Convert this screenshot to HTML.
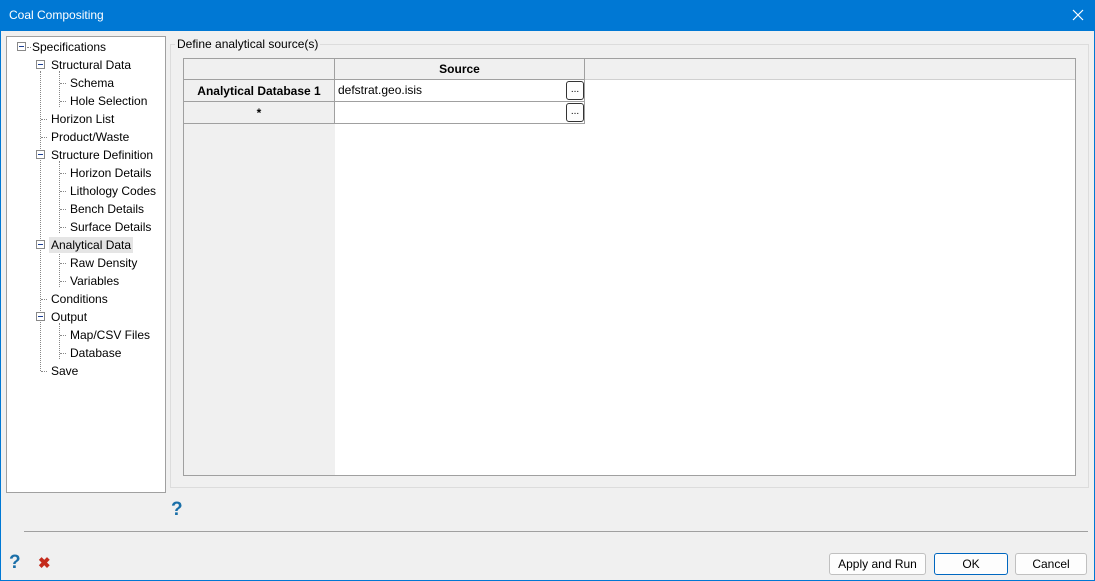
<!DOCTYPE html>
<html><head><style>
*{margin:0;padding:0;box-sizing:border-box}
body{width:1095px;height:581px;background:#f0f0f0;font-family:"Liberation Sans",sans-serif;font-size:12px;color:#000;position:relative;overflow:hidden}
.a{position:absolute}
.win{left:0;top:0;width:1095px;height:581px;border:1px solid #0078d4;border-top:none}
.title{left:0;top:0;width:1095px;height:31px;background:#0078d4;color:#fff;font-size:12px;line-height:31px;padding-left:9px}
.tree{left:6px;top:36px;width:160px;height:457px;background:#fff;border:1px solid #a0a0a0}
.t{position:absolute;line-height:16px;white-space:nowrap}
.box{position:absolute;width:9px;height:9px;border:1px solid #888;background:#fff}
.box:after{content:"";position:absolute;left:1px;top:3px;width:5px;height:1px;background:#1c3f94}
.vl{position:absolute;border-left:1px dotted #888}
.hl{position:absolute;border-top:1px dotted #888;width:6px}
.btn{position:absolute;top:553px;height:22px;border:1px solid #c0c0c0;background:#fdfdfd;border-radius:3px;text-align:center;line-height:20px}
.cell{position:absolute;border-right:1px solid #a0a0a0;border-bottom:1px solid #a0a0a0}
.dots{position:absolute;width:18px;height:19px;border:1px solid #333;border-radius:3px;background:#fdfdfd;font-size:10px;text-align:center;line-height:15px}
</style></head><body>
<div class="a title">Coal Compositing</div>
<svg class="a" style="left:1072px;top:9px" width="12" height="12"><path d="M1 1L11 11M11 1L1 11" stroke="#fff" stroke-width="1.2"/></svg>
<div class="a win"></div>
<div class="a tree">
<div class="vl" style="left:33px;top:34px;height:300px"></div>
<div class="vl" style="left:52px;top:34px;height:36px"></div>
<div class="vl" style="left:52px;top:124px;height:72px"></div>
<div class="vl" style="left:52px;top:214px;height:36px"></div>
<div class="vl" style="left:52px;top:286px;height:36px"></div>
<div class="hl" style="left:20px;top:10px;width:4px"></div>
<div class="box" style="left:10px;top:5px"></div><div class="t" style="left:25px;top:2px">Specifications</div>
<div class="box" style="left:29px;top:23px"></div><div class="t" style="left:44px;top:20px">Structural Data</div>
<div class="hl" style="left:53px;top:46px"></div><div class="t" style="left:63px;top:38px">Schema</div>
<div class="hl" style="left:53px;top:64px"></div><div class="t" style="left:63px;top:56px">Hole Selection</div>
<div class="hl" style="left:34px;top:82px"></div><div class="t" style="left:44px;top:74px">Horizon List</div>
<div class="hl" style="left:34px;top:100px"></div><div class="t" style="left:44px;top:92px">Product/Waste</div>
<div class="box" style="left:29px;top:113px"></div><div class="t" style="left:44px;top:110px">Structure Definition</div>
<div class="hl" style="left:53px;top:136px"></div><div class="t" style="left:63px;top:128px">Horizon Details</div>
<div class="hl" style="left:53px;top:154px"></div><div class="t" style="left:63px;top:146px">Lithology Codes</div>
<div class="hl" style="left:53px;top:172px"></div><div class="t" style="left:63px;top:164px">Bench Details</div>
<div class="hl" style="left:53px;top:190px"></div><div class="t" style="left:63px;top:182px">Surface Details</div>
<div class="box" style="left:29px;top:203px"></div><div class="t" style="left:42px;top:200px;background:#e5e5e5;padding:0 2px">Analytical Data</div>
<div class="hl" style="left:53px;top:226px"></div><div class="t" style="left:63px;top:218px">Raw Density</div>
<div class="hl" style="left:53px;top:244px"></div><div class="t" style="left:63px;top:236px">Variables</div>
<div class="hl" style="left:34px;top:262px"></div><div class="t" style="left:44px;top:254px">Conditions</div>
<div class="box" style="left:29px;top:275px"></div><div class="t" style="left:44px;top:272px">Output</div>
<div class="hl" style="left:53px;top:298px"></div><div class="t" style="left:63px;top:290px">Map/CSV Files</div>
<div class="hl" style="left:53px;top:316px"></div><div class="t" style="left:63px;top:308px">Database</div>
<div class="hl" style="left:34px;top:334px"></div><div class="t" style="left:44px;top:326px">Save</div>
</div>
<div class="a" style="left:170px;top:44px;width:919px;height:444px;border:1px solid #dcdcdc"></div>
<div class="a" style="left:175px;top:37px;background:#f0f0f0;padding:0 2px;line-height:14px">Define analytical source(s)</div>
<div class="a" style="left:183px;top:58px;width:893px;height:418px;border:1px solid #a0a0a0;background:#fff">
<div class="a" style="left:0;top:0;width:891px;height:21px;background:#f0f0f0;border-bottom:1px solid #d0d0d0"></div>
<div class="a" style="left:0;top:0;width:151px;height:416px;background:#f0f0f0"></div>
<div class="cell" style="left:0;top:0;width:151px;height:21px"></div>
<div class="cell" style="left:151px;top:0;width:250px;height:21px;text-align:center;font-weight:bold;line-height:21px">Source</div>
<div class="cell" style="left:0;top:21px;width:151px;height:22px;text-align:center;font-weight:bold;line-height:22px">Analytical Database 1</div>
<div class="cell" style="left:151px;top:21px;width:250px;height:22px;background:#fff;line-height:20px;padding-left:3px">defstrat.geo.isis</div>
<div class="cell" style="left:0;top:43px;width:151px;height:22px;text-align:center;font-weight:bold;line-height:22px">*</div>
<div class="cell" style="left:151px;top:43px;width:250px;height:22px;background:#fff"></div>
<div class="dots" style="left:382px;top:22px">...</div>
<div class="dots" style="left:382px;top:44px">...</div>
</div>
<div class="a" style="left:171px;top:499px;color:#1a6fa8;font-weight:bold;font-size:19px">?</div>
<div class="a" style="left:24px;top:531px;width:1064px;border-top:1px solid #a0a0a0"></div>
<div class="a" style="left:9px;top:552px;color:#1a6fa8;font-weight:bold;font-size:19px">?</div>
<div class="a" style="left:38px;top:554px;color:#c42b1c;font-weight:bold;font-size:15px">✖</div>
<div class="btn" style="left:829px;width:97px">Apply and Run</div>
<div class="btn" style="left:934px;width:74px;border:1px solid #0067c0">OK</div>
<div class="btn" style="left:1015px;width:72px">Cancel</div>
</body></html>
